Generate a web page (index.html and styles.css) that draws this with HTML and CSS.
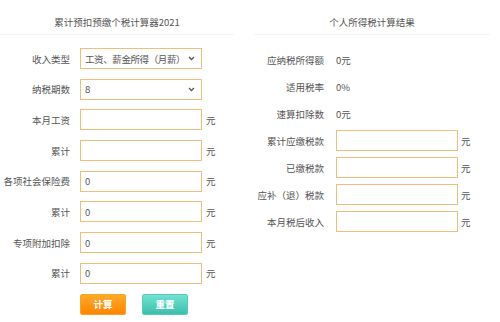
FILE: index.html
```html
<!DOCTYPE html>
<html>
  <head>
    <meta charset="utf-8" />
    <title>累计预扣预缴个税计算器2021</title>
    <link rel="stylesheet" href="styles.css">
  </head>

  <body>
    <div class="page">
      <div class="panel calc">
        <h2 class="panel-title">累计预扣预缴个税计算器2021</h2>
        <div class="form">
          <div class="row">
            <label>收入类型</label>
            <div class="select-wrap">
              <select class="field">
                <option>工资、薪金所得（月薪）</option>
              </select>
              <svg class="arrow" width="7" height="5" viewBox="0 0 7 5"><path d="M1 1 L3.5 3.5 L6 1" fill="none" stroke="#555" stroke-width="1.3"/></svg>
            </div>
          </div>
          <div class="row">
            <label>纳税期数</label>
            <div class="select-wrap">
              <select class="field">
                <option>8</option>
              </select>
              <svg class="arrow" width="7" height="5" viewBox="0 0 7 5"><path d="M1 1 L3.5 3.5 L6 1" fill="none" stroke="#555" stroke-width="1.3"/></svg>
            </div>
          </div>
          <div class="row">
            <label>本月工资</label>
            <input class="field" type="text" value="" />
            <span class="unit">元</span>
          </div>
          <div class="row">
            <label>累计</label>
            <input class="field" type="text" value="" />
            <span class="unit">元</span>
          </div>
          <div class="row">
            <label>各项社会保险费</label>
            <input class="field" type="text" value="0" />
            <span class="unit">元</span>
          </div>
          <div class="row">
            <label>累计</label>
            <input class="field" type="text" value="0" />
            <span class="unit">元</span>
          </div>
          <div class="row">
            <label>专项附加扣除</label>
            <input class="field" type="text" value="0" />
            <span class="unit">元</span>
          </div>
          <div class="row">
            <label>累计</label>
            <input class="field" type="text" value="0" />
            <span class="unit">元</span>
          </div>
          <div class="buttons">
            <button class="btn btn-calc">计算</button>
            <button class="btn btn-reset">重置</button>
          </div>
        </div>
      </div>

      <div class="panel result">
        <h2 class="panel-title">个人所得税计算结果</h2>
        <div class="form">
          <div class="row">
            <label>应纳税所得额</label>
            <span class="value">0元</span>
          </div>
          <div class="row">
            <label>适用税率</label>
            <span class="value">0%</span>
          </div>
          <div class="row">
            <label>速算扣除数</label>
            <span class="value">0元</span>
          </div>
          <div class="row">
            <label>累计应缴税款</label>
            <input class="field" type="text" value="" />
            <span class="unit">元</span>
          </div>
          <div class="row">
            <label>已缴税款</label>
            <input class="field" type="text" value="" />
            <span class="unit">元</span>
          </div>
          <div class="row">
            <label>应补（退）税款</label>
            <input class="field" type="text" value="" />
            <span class="unit">元</span>
          </div>
          <div class="row">
            <label>本月税后收入</label>
            <input class="field" type="text" value="" />
            <span class="unit">元</span>
          </div>
        </div>
      </div>
    </div>
  </body>
</html>
```

FILE: styles.css
```css
body {
  margin: 0;
  background: #fff;
  color: #555;
  font-family: "Noto Sans CJK SC", "Liberation Sans", sans-serif;
  font-size: 9.5px;
}
.page {
  display: flex;
  width: 500px;
  height: 322px;
  overflow: hidden;
}
.panel {
  display: flex;
  flex-direction: column;
}
.calc {
  width: 234px;
}
.result {
  width: 236px;
  margin-left: 20px;
}
.panel-title {
  margin: 0;
  padding: 14px 0 4px;
  line-height: 16px;
  font-size: 9.5px;
  font-weight: normal;
  text-align: center;
  color: #555;
  border-bottom: 1px solid #f3f3f3;
}
.form {
  display: flex;
  flex-direction: column;
}
.calc .form {
  margin-top: 13px;
  gap: 9.7px;
}
.result .form {
  margin-top: 14px;
  gap: 6px;
}
.row {
  display: flex;
  align-items: center;
  height: 21px;
}
.row label {
  width: 70px;
  text-align: right;
  white-space: nowrap;
  color: #555;
}
.calc .row label {
  margin-right: 10px;
}
.result .row label {
  margin-right: 12px;
}
.field {
  box-sizing: border-box;
  width: 122px;
  height: 21px;
  margin: 0;
  padding: 0 4px;
  border: 1px solid #efbe7c;
  background: #fff;
  color: #555;
  font-family: inherit;
  font-size: 9.5px;
  outline: none;
}
select.field {
  appearance: none;
  -webkit-appearance: none;
  border-radius: 0;
  letter-spacing: -0.4px;
}
.select-wrap {
  position: relative;
  display: flex;
}
.select-wrap .arrow {
  position: absolute;
  right: 7px;
  top: 8px;
  pointer-events: none;
}
.unit {
  margin-left: 4px;
  color: #555;
}
.result .unit {
  margin-left: 3px;
}
.value {
  color: #555;
}
.buttons {
  display: flex;
  gap: 16px;
  margin-left: 80px;
}
.btn {
  width: 46px;
  height: 21px;
  padding: 0;
  border-radius: 2px;
  color: #fff;
  font-family: inherit;
  font-size: 9.5px;
  font-weight: bold;
  cursor: pointer;
}
.btn-calc {
  border: 1px solid #f5a623;
  background: linear-gradient(#ffaa2a, #ff8400);
}
.btn-reset {
  border: 1px solid #56cdbc;
  background: linear-gradient(#72e2d2, #3cbfac);
}
```
